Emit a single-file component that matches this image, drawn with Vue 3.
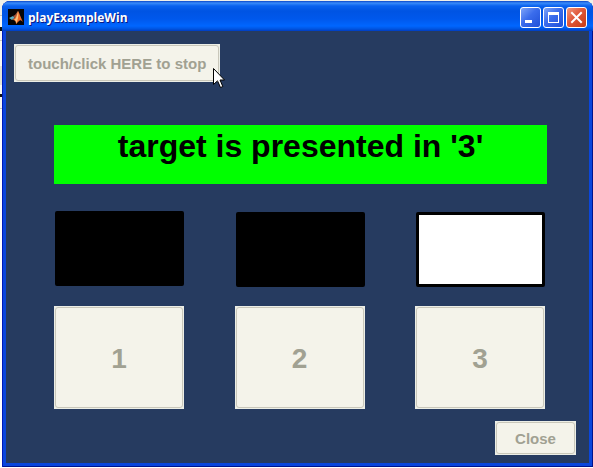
<script setup>
import { ref } from 'vue'

const title = 'playExampleWin'
const target = ref(3)
const choices = [1, 2, 3]
</script>

<template>
  <div class="desktop">
    <section class="window" :aria-label="title">
      <header class="titlebar">
        <svg class="logo" viewBox="0 0 16 16" aria-hidden="true">
          <rect width="16" height="16" fill="#050505" />
          <path d="M1 9 L5 7 L7 9 L4 11 Z" fill="#58b0c4" />
          <path d="M5 7 L7 6 L10 2 L9 8 L6 11 L4 10 L7 9 Z" fill="#a4553a" />
          <path d="M10 2 C11 3 13 9 15 13 C13 11 12 11 11 12 L8 15 C8 12 7 11 5 11 C8 9 9 5 10 2 Z" fill="#ec6a26" />
          <path d="M10 2 C9 7 8 10 6 11 C8 11 8 13 8 15 C10 11 11 6 10 2 Z" fill="#f9c07a" />
        </svg>
        <h1>{{ title }}</h1>
        <div class="controls">
          <button type="button" class="control" aria-label="Minimize">
            <svg viewBox="0 0 19 19"><rect x="4" y="12" width="7" height="3" fill="#fff" /></svg>
          </button>
          <button type="button" class="control" aria-label="Maximize">
            <svg viewBox="0 0 19 19">
              <path d="M4 4h11v11H4z M5 7v7h9V7z" fill="#fff" fill-rule="evenodd" />
            </svg>
          </button>
          <button type="button" class="control control-close" aria-label="Close window">
            <svg viewBox="0 0 19 19"><path d="M5 5L14 14M14 5L5 14" stroke="#fff" stroke-width="2" stroke-linecap="square" /></svg>
          </button>
        </div>
      </header>

      <main class="body">
        <div class="stop-wrap">
          <button type="button" class="push stop" disabled><span>touch/click HERE to stop</span></button>
          <svg class="pointer" viewBox="0 0 12 21" aria-hidden="true">
            <path d="M.5 .5V16.5L4.5 12.8L7.5 19.5L9.8 18.5L7 12H11.5Z" fill="#fff" stroke="#000" />
          </svg>
        </div>

        <p class="banner">target is presented in '{{ target }}'</p>

        <div class="choices">
          <div v-for="n in choices" :key="n" class="choice">
            <div class="stimulus" :class="{ lit: n === target }"></div>
            <button type="button" class="push number" disabled><span>{{ n }}</span></button>
          </div>
        </div>

        <button type="button" class="push close" disabled><span>Close</span></button>
      </main>
    </section>
  </div>
</template>

<style>
body {
  margin: 0;
  background: #f4f4ee;
}
</style>

<style scoped>
* {
  box-sizing: border-box;
}

.desktop {
  min-height: 100vh;
  display: flex;
  padding: 1px 0 1px 2px;
  background: linear-gradient(#f1f0e8 15px, #c8c8c0 15px 16px, #f8f8f4 16px 27px, #111 27px 31px, #f8f8f4 31px 40px, #c8c8c0 40px 41px, #f8f8f4 41px 66px, #e4e3d8 66px 85px, #f8f8f4 85px 94px, #111 94px 97px, #f8f8f4 97px 108px, #c8c8c0 108px 109px, #fff 109px);
  font-family: "Liberation Sans", Arial, sans-serif;
}

.window {
  flex: 1;
  display: flex;
  flex-direction: column;
  border-radius: 8px 8px 0 0;
  overflow: hidden;
  background: #0a46dc;
  box-shadow: inset 1px 0 #0019b8, inset -1px -1px #00138c;
}

.titlebar {
  display: flex;
  align-items: center;
  height: 30px;
  padding: 2px 6px 0 6px;
  background: linear-gradient(#0a46c8 0, #3a8cfa 2px, #0a62ee 5px, #0054e3 10px, #0058ec 18px, #0066ff 25px, #0054e0 28px, #003cc0 30px);
}

.logo {
  width: 16px;
  height: 16px;
}

h1 {
  flex: 1;
  margin: 0 0 0 4px;
  padding-top: 2px;
  color: #fff;
  font: bold 12px/16px "Open Sans", "Noto Sans", sans-serif;
  text-shadow: 1px 1px #0a1883;
}

.controls {
  display: flex;
  gap: 2px;
}

.control {
  width: 21px;
  height: 21px;
  padding: 0;
  border: 1px solid #fff;
  border-radius: 3px;
  background: linear-gradient(135deg, #7ea4f8, #3a6cec 45%, #1f50d8);
}

.control svg {
  display: block;
  width: 19px;
  height: 19px;
}

.control-close {
  background: linear-gradient(135deg, #f0977c, #e0583a 45%, #c83c14);
}

.body {
  flex: 1;
  display: flex;
  flex-direction: column;
  margin: 0 4px 4px;
  padding: 13px 13px 8px 8px;
  background: #263b60;
}

.stop-wrap {
  position: relative;
  align-self: flex-start;
}

.pointer {
  position: absolute;
  right: -5px;
  bottom: -7px;
  width: 12px;
  height: 21px;
}

.push {
  display: flex;
  padding: 1px;
  border: 0;
  background: #eceee6;
  color: #a1a192;
  font-family: inherit;
  font-weight: bold;
}

.push span {
  flex: 1;
  align-self: stretch;
  display: flex;
  align-items: center;
  justify-content: center;
  border: 1px solid #c9c7ba;
  border-radius: 3px;
  background: #f4f3ea;
}

.stop {
  height: 38px;
  font-size: 15px;
}

.stop span {
  padding: 0 12px;
}

.banner {
  height: 59px;
  margin: 43px 29px 0 40px;
  background: #00ff00;
  color: #000;
  font-size: 32px;
  font-weight: bold;
  line-height: 42px;
  text-align: center;
}

.choices {
  display: flex;
  justify-content: space-between;
  margin: 27px 31px 0 40px;
}

.choice {
  width: 130px;
}

.stimulus {
  height: 75px;
  margin: 0 0 20px 1px;
  border: 3px solid #000;
  border-radius: 2px;
  background: #000;
}

.choice:not(:first-child) .stimulus {
  margin: 1px 0 19px 1px;
}

.stimulus.lit {
  background: #fff;
}

.number {
  width: 100%;
  height: 103px;
  font-size: 28px;
}

.number span {
  padding-top: 2px;
}

.close {
  align-self: flex-end;
  width: 81px;
  height: 34px;
  margin-top: auto;
  font-size: 15px;
}
</style>
